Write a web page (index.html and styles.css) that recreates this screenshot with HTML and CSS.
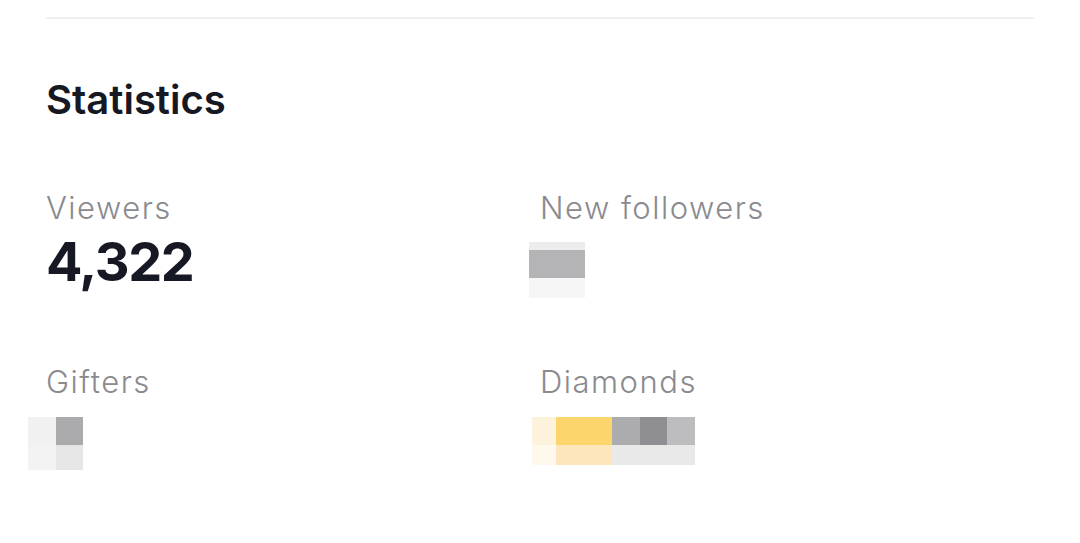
FILE: index.html
```html
<!DOCTYPE html>
<html lang="en">
<head>
    <meta charset="UTF-8">
    <meta name="viewport" content="width=device-width, initial-scale=1.0">
    <title>Statistics</title>
    <link rel="stylesheet" href="styles.css">
</head>
<body>
    <div class="page">
        <hr class="divider">
        <h1 class="title">Statistics</h1>
        <div class="stats">
            <div class="stat">
                <div class="label">Viewers</div>
                <div class="value">4,322</div>
            </div>
            <div class="stat">
                <div class="label">New followers</div>
                <div class="blur blur-followers">
                    <span class="px px-top"></span>
                    <span class="px px-gray"></span>
                    <span class="px px-bottom"></span>
                </div>
            </div>
            <div class="stat">
                <div class="label">Gifters</div>
                <div class="blur blur-gifters">
                    <span class="cell c-light"></span>
                    <span class="cell c-gray"></span>
                    <span class="cell c-fade"></span>
                    <span class="cell c-fade2"></span>
                </div>
            </div>
            <div class="stat">
                <div class="label">Diamonds</div>
                <div class="blur blur-diamonds">
                    <span class="cell d-cream"></span>
                    <span class="cell d-yellow"></span>
                    <span class="cell d-gray"></span>
                    <span class="cell d-dark"></span>
                    <span class="cell d-light"></span>
                    <span class="cell d-cream2"></span>
                    <span class="cell d-yellow2"></span>
                    <span class="cell d-fade"></span>
                    <span class="cell d-fade"></span>
                    <span class="cell d-fade"></span>
                </div>
            </div>
        </div>
    </div>
</body>
</html>
```

FILE: styles.css
```css
body {
    margin: 0;
    background: #ffffff;
    font-family: "Inter", "Open Sans", sans-serif;
    color: #161823;
}
.page {
    padding: 17px 46px 0 46px;
}
.divider {
    border: 0;
    height: 2px;
    background: #efefef;
    margin: 0;
}
.title {
    font-size: 40px;
    font-weight: 600;
    margin: 57px 0 0 0;
    line-height: 48px;
}
.stats {
    display: grid;
    grid-template-columns: 494px 1fr;
    margin-top: 66px;
}
.stat {
    height: 174px;
}
.label {
    font-size: 31px;
    line-height: 36px;
    font-weight: 350;
    color: #8a8a8f;
    letter-spacing: 1.5px;
}
.value {
    font-size: 54px;
    line-height: 60px;
    font-weight: 700;
    letter-spacing: -1.4px;
    margin-top: 6px;
}
.blur {
    margin-top: 16px;
}
.blur-followers {
    width: 56px;
    margin-left: -11px;
    display: flex;
    flex-direction: column;
}
.px {
    display: block;
    width: 56px;
}
.px-top {
    height: 8px;
    background: #ececed;
}
.px-gray {
    height: 28px;
    background: #b4b4b6;
}
.px-bottom {
    height: 20px;
    background: #f6f6f6;
}
.blur-gifters {
    display: grid;
    grid-template-columns: 28px 27px;
    grid-template-rows: 28px 25px;
    margin-left: -18px;
    margin-top: 17px;
}
.cell {
    display: block;
}
.c-light {
    background: #f1f1f1;
}
.c-gray {
    background: #ababad;
}
.c-fade {
    background: #f3f3f3;
}
.c-fade2 {
    background: #e6e6e7;
}
.blur-diamonds {
    display: grid;
    grid-template-columns: 24px 56px 28px 27px 28px;
    grid-template-rows: 28px 20px;
    margin-left: -8px;
    margin-top: 17px;
}
.d-cream {
    background: #fdf3dc;
}
.d-yellow {
    background: #fcd56c;
}
.d-gray {
    background: #acacaf;
}
.d-dark {
    background: #8f8f93;
}
.d-light {
    background: #bdbdc0;
}
.d-cream2 {
    background: #fff8ec;
}
.d-yellow2 {
    background: #fde6bc;
}
.d-fade {
    background: #e9e9ea;
}
```
